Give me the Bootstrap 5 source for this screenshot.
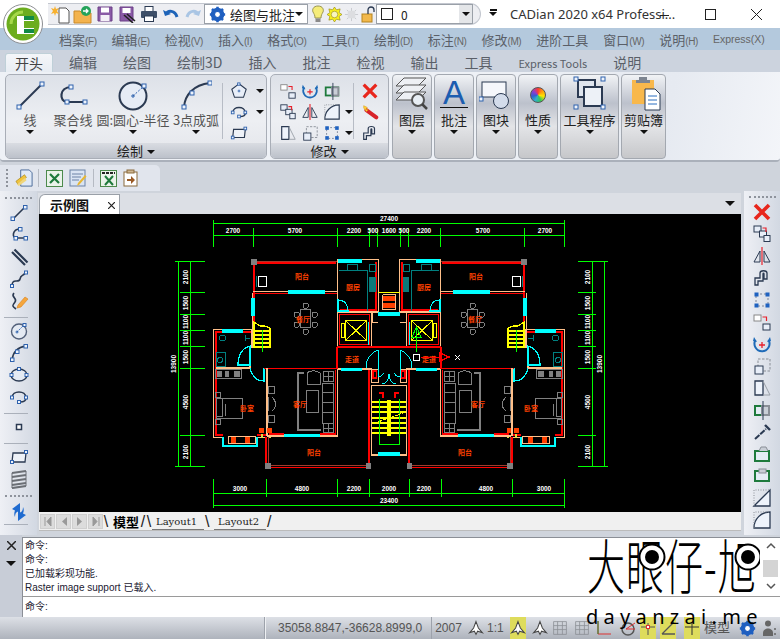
<!DOCTYPE html>
<html lang="zh-CN">
<head>
  <meta charset="UTF-8">
  <title>CADian 2020 x64 Professional</title>
  <meta name="viewport" content="width=device-width, initial-scale=1">
  <link href="https://cdn.jsdelivr.net/npm/bootstrap@5.3.3/dist/css/bootstrap.min.css" rel="stylesheet">
  <style>
    body { width: 780px; height: 639px; overflow: hidden; background: #cfd4dc; font-family: "Liberation Sans", "Noto Sans CJK SC", sans-serif; color: #333; }
    .app-win { width: 780px; height: 639px; position: relative; overflow: hidden; }
    svg { display: block; flex: none; }
    .no-clip { overflow: visible; }

    /* title bar */
    .title-bar { height: 28px; background: #fff; }
    .app-logo { position: absolute; left: 3px; top: 4px; z-index: 5; }
    .qat { height: 22px; margin: 3px 0 0 48px; width: 433px; padding-left: 2px; background: #edeef2; border: 1px solid #c3c7cf; border-left: 0; border-radius: 0 11px 11px 0; }
    .qat > * { flex: none; }
    .qat-ico { width: 22px; }
    .qat-combo { height: 20px; background: #fff; border: 1px solid #9aa0a8; font: 13px "Noto Sans CJK SC", sans-serif; color: #222; white-space: nowrap; }
    .qat-combo1 { width: 104px; margin-right: 2px; }
    .qat-combo2 { width: 97px; margin-left: 1px; }
    .combo-drop { width: 13px; align-self: stretch; background: #e4e6e9; }
    .title-text { width: 160px; margin: 5px 0 0 13px; font: 13px "Noto Sans", sans-serif; color: #333; white-space: nowrap; }
    .min-dash { width: 9px; height: 1px; background: #222; margin: 15px 0 0 -10px; }

    /* menu + tabs */
    .menu-row { height: 22px; background: #b4c9dd; padding-left: 59px; gap: 15px; font: 13px "Noto Sans CJK SC", sans-serif; color: #5a5f68; white-space: nowrap; }
    .menu-row small { font: 10px "Liberation Sans", sans-serif; letter-spacing: -.4px; color: #666; }
    .menu-row .xp-menu { font: 10.5px "Liberation Sans", sans-serif; color: #666; }
    .tab-row { height: 22px; background: #ccd3de; padding-left: 2px; font: 14px "Noto Sans CJK SC", sans-serif; color: #5a5f68; white-space: nowrap; }
    .rb-tab { padding: 0 10px; margin: 3px 3px 0; line-height: 19px; height: 19px; }
    .rb-tab.on { background: linear-gradient(#f4f6f9, #e8edf3); border: 1px solid #bfd0d8; border-bottom: 0; border-radius: 3px 3px 0 0; padding: 0 9px; color: #444; line-height: 18px; }
    .rb-tab .xt { font-size: 11px; }

    /* ribbon */
    .ribbon { height: 90px; background: linear-gradient(100deg, #eef1f6 60%, #e6eaf1 85%, #f3f5f9); border-bottom: 2px solid #aab0ba; border-radius: 0 0 4px 4px; padding: 2px 0 0 5px; gap: 3px; }
    .rb-group { width: 262px; height: 85px; border: 1px solid #a9aeb7; border-radius: 5px; background: linear-gradient(#dde1e8, #edeff3 55%, #e3e5ea); position: relative; }
    .rb-group.g2 { width: 119px; }
    .rb-body { height: 68px; padding: 5px 0 0 2px; }
    .rb-label { height: 15px; background: linear-gradient(#d9dce2, #bcc1ca); border-radius: 0 0 4px 4px; font: 13px/15px "Noto Sans CJK SC", sans-serif; color: #222; }
    .big-item { height: 62px; font: 13px/16px "Noto Sans CJK SC", sans-serif; color: #555; white-space: nowrap; }
    .big-ico { height: 31px; margin-bottom: 1px; }
    .iw44 { width: 44px; } .iw42 { width: 42px; } .iw78 { width: 78px; } .iw48 { width: 48px; }
    .rb-sep { width: 1px; height: 56px; background: #b7bcc5; margin: 3px 7px 0 2px; }
    .sm-row { height: 22px; }
    .dn-arrow { width: 0; height: 0; border-top: 4px solid #111; border-left: 4px solid transparent; border-right: 4px solid transparent; display: inline-block; flex: none; }
    .drop-gap { margin-top: 2px; }
    .rb-btn { height: 85px; border: 1px solid #a3a8b0; border-radius: 4px; background: linear-gradient(#f1f3f6, #bcc1cc 34%, #e3e4e7 62%, #c6c7ca); font: 13px/16px "Noto Sans CJK SC", sans-serif; color: #222; white-space: nowrap; padding-top: 1px; }
    .bw40 { width: 40px; margin-right: 2px; } .bw59 { width: 59px; margin-right: 2px; } .bw45 { width: 45px; }
    .big-glyph { height: 36px; }
    .col-wheel { width: 16px; height: 16px; border-radius: 50%; border: 1px solid #555; margin-top: 11px; background: conic-gradient(#ff3b30, #ff9f0a, #ffe600, #34c759, #30b0c7, #2f5fd0, #8e3bd0, #ff3b30); }

    /* small toolbar */
    .strip { height: 29px; padding-top: 3px; }
    .strip-bar { width: 160px; height: 26px; background: #e1e5ed; border-radius: 0 5px 0 0; padding-left: 6px; }
    .grip-v { width: 2px; height: 18px; border-left: 2px dotted #8e939c; margin-right: 3px; }
    .tool-sep-v { width: 1px; height: 18px; background: #b5bac3; margin: 0 4px; }

    /* side tool columns */
    .work { height: 344px; }
    .side-tools { width: 37px; background: linear-gradient(90deg, #eef0f5, #d2d8e2); }
    .side-tools.rt { width: 36px; margin-left: 3px; }
    .grip-h { width: 27px; height: 2px; border-top: 2px dotted #8e939c; margin: 6px auto 4px; }
    .side-tools.rt .grip-h { margin-top: 5px; }
    .side-tools .grip-low { margin: 4px auto 5px; }
    .t-item { height: 22px; }
    .tool-sep-h { width: 24px; height: 1px; background: #aab0ba; margin: 4px 0 3px 4px; }

    /* drawing area */
    .draw-col { width: 704px; padding-top: 2px; }
    .doc-head { height: 21px; background: #dcdfe5; margin-left: 1px; }
    .doc-tab { width: 81px; height: 20px; margin: 1px 0 0 1px; background: #fff; border: 1px solid #9aa0a8; border-bottom: 0; border-radius: 6px 0 0 0; padding-left: 10px; font: bold 13px/19px "Noto Sans CJK SC", sans-serif; color: #111; }
    .cad-view { width: 702px; height: 298px; margin-left: 2px; background: #000; }
    .sheet-row { height: 19px; margin-left: 2px; width: 702px; background: #f0f0f0; border-bottom: 1px solid #bbb; }
    .nav-btn { width: 15px; height: 15px; margin-left: 1px; background: #dcdcdc; border: 1px solid #cfcfcf; }
    .sheet-tab { font: 10px/18px "DejaVu Serif", serif; color: #222; padding: 0 7px 0 4px; height: 17px; border-bottom: 1px solid #777; white-space: nowrap; }
    .sheet-tab.on { font: bold 13px/17px "Noto Sans CJK SC", serif; color: #000; border: 0; padding: 0 1px 0 4px; }
    .sheet-slash { font: 16px/17px "Liberation Sans", sans-serif; color: #222; width: 6px; text-align: center; }

    /* command */
    .cmd-area { height: 82px; }
    .cmd-strip { width: 22px; background: #c8cdd7; padding-top: 5px; }
    .cmd-pane { width: 758px; height: 80px; margin-top: 2px; background: #fff; border: 1px solid #8b8f96; border-right: 0; border-bottom: 0; font: 10px/14px "Liberation Sans", "Noto Sans CJK SC", sans-serif; color: #1b2030; position: relative; }
    .cmd-hist { height: 59px; padding: 1px 0 0 2px; border-bottom: 1px solid #9a9a9a; }
    .cmd-line { padding: 3px 0 0 2px; }
    .cmd-scroll { position: absolute; right: 1px; top: 0; width: 17px; height: 58px; }
    .cmd-thumb { height: 17px; width: 15px; background: #d4d4d4; }
    .mark-box { position: absolute; left: 575px; top: 536px; width: 185px; height: 90px; z-index: 4; }
    .mark-main { position: absolute; left: 12px; top: -1px; font: 38px/38px "Noto Sans CJK SC", sans-serif; font-weight: 300; color: #000; white-space: nowrap; letter-spacing: 1px; transform: scaleY(1.55); transform-origin: left top; }
    .mark-sub { position: absolute; left: 11px; top: 72px; font: 20px/18px "Noto Sans", sans-serif; letter-spacing: 5.3px; color: #000; white-space: nowrap; }
    .mark-eye { position: absolute; left: 0; top: 0; }

    /* status */
    .status-bar { height: 22px; background: linear-gradient(#dde0e6, #aeb3bc); font: 12px/22px "Liberation Sans", "Noto Sans CJK SC", sans-serif; color: #555; white-space: nowrap; }
    .st-left { width: 265px; border-right: 1px solid #9da2ab; height: 22px; }
    .st-coord { width: 167px; padding-left: 12px; border-left: 1px solid #eef0f3; border-right: 1px solid #9da2ab; }
    .st-ver { width: 33px; text-align: center; }
    .st-ico { width: 22px; height: 22px; flex: none; }
    .st-ico.nar { width: 19px; }
    .st-ico.wid { width: 25px; }
    .st-ico.y { background: #dedc5c; width: 16px; }

    /* icon strokes */
    .h { fill: #eef3fb; stroke: #2f62ad; stroke-width: 1; }
    .n { fill: none; stroke: #2b3a52; stroke-width: 1.6; }
    .m { fill: none; stroke: #2b3a52; stroke-width: 1; }
    .b { fill: none; stroke: #1f6bb8; stroke-width: 2; }
    .r { fill: none; stroke: #e8202a; stroke-width: 1.2; }
    .g { fill: #e4ecf4; stroke: #1e7a3c; stroke-width: 2; }
    .f { fill: #e8eef8; stroke: #2b3a52; stroke-width: 1; }

    /* plan strokes */
    .wr, .wp, .wd, .cy, .yl, .gn, .gy, .te, .wt { fill: none; }
    .wr { stroke: #ff0000; stroke-width: 1.4; }
    .wp { stroke: #ffc08a; }
    .wd { stroke: #a5392c; }
    .cy { stroke: #00ffff; }
    .cf { fill: #00ffff; }
    .yl { stroke: #ffff00; }
    .yf { fill: #ffff00; }
    .gn { stroke: #00ff00; }
    .gy { stroke: #808080; }
    .gf { fill: #808080; }
    .te { stroke: #008080; }
    .tf { fill: #0a7a7a; }
    .or { fill: #ff4000; }
    .lm { fill: #e0e040; }
    .wt { stroke: #fff; }
    .cad-dim { font: bold 6.500px "Liberation Sans", sans-serif; fill: #fff; }
    .cad-room { font: bold 7px "Noto Sans CJK SC", sans-serif; fill: #ff4000; }
  </style>
</head>
<body>
<svg width="0" height="0" style="position:absolute">
  <defs>
    <!-- draw tools -->
    <symbol id="i-line" viewBox="0 0 20 20"><path class="n" d="M4 16 16 4"/><rect class="h" x="2" y="14" width="3.5" height="3.5"/><rect class="h" x="14.5" y="2.5" width="3.5" height="3.5"/></symbol>
    <symbol id="i-pline" viewBox="0 0 20 20"><path class="n" d="M11 4C3 4 3 13 7 13H16"/><rect class="h" x="9.500" y="2.500" width="3.500" height="3.500"/><rect class="h" x="5" y="11.500" width="3.500" height="3.500"/><rect class="h" x="15" y="11.500" width="3.500" height="3.500"/></symbol>
    <symbol id="i-mline" viewBox="0 0 20 20"><path class="n" d="M3 5 16 18M5.500 2.500 18.500 15.500" style="stroke-width:2.200"/></symbol>
    <symbol id="i-spline" viewBox="0 0 20 20"><path class="n" d="M3 17C3 8 10 15 11 10S14 8 17 3"/><rect class="h" x="1.500" y="15.500" width="3" height="3"/><rect class="h" x="15.500" y="2" width="3" height="3"/></symbol>
    <symbol id="i-sketch" viewBox="0 0 20 20"><path class="n" d="M5 2C1 6 9 7 6 11S3 15 7 18"/><path d="M9 14 16 6l3 2-7 8-4 1z" fill="#f5a63c" stroke="#d97f1a" stroke-width=".6"/></symbol>
    <symbol id="i-circle" viewBox="0 0 20 20"><circle cx="10" cy="10.500" r="7.500" fill="#e4eaf3" stroke="#52607a" stroke-width="1.400"/><path d="M8 11 15 4" stroke="#2f62ad" stroke-dasharray="1.500 1"/><path d="M6.500 11h3M8 9.500v3" stroke="#2f62ad"/><rect class="h" x="14" y="2.500" width="3" height="3"/></symbol>
    <symbol id="i-arc" viewBox="0 0 20 20"><path class="n" d="M3 17C4 9 9 4 17 3"/><rect class="h" x="1.500" y="15" width="3.500" height="3.500"/><rect class="h" x="6.500" y="7" width="3.500" height="3.500"/><rect class="h" x="15" y="1.500" width="3.500" height="3.500"/></symbol>
    <symbol id="i-ellipse" viewBox="0 0 20 20"><ellipse cx="10" cy="10" rx="8" ry="6" fill="#e4eaf3" stroke="#2b3a52" stroke-width="1.400"/><rect class="h" x="1" y="8.500" width="3" height="3"/><rect class="h" x="16" y="8.500" width="3" height="3"/><rect class="h" x="8.500" y="2.500" width="3" height="3"/></symbol>
    <symbol id="i-earc" viewBox="0 0 20 20"><path class="n" d="M3 11C3 3 17 3 17 11 17 14 14 15 11 15"/><rect class="h" x="1.500" y="9" width="3" height="3"/><rect class="h" x="15.500" y="9" width="3" height="3"/><rect class="h" x="8.500" y="13.500" width="3" height="3"/></symbol>
    <symbol id="i-point" viewBox="0 0 20 20"><rect x="7.500" y="7.500" width="5" height="5" fill="#fff" stroke="#2b3a52" stroke-width="1.500"/></symbol>
    <symbol id="i-rect" viewBox="0 0 20 20"><path d="M4 6H17L16 15H3Z" fill="#eef2f8" stroke="#2b3a52" stroke-width="1.300"/><rect class="h" x="15.500" y="3.500" width="3" height="3"/><rect class="h" x="1.500" y="13.500" width="3" height="3"/></symbol>
    <symbol id="i-spring" viewBox="0 0 20 20"><path d="M3 4 17 2M3 8 17 6M3 12 17 10M3 16 17 14M3 19 17 17" stroke="#6b6f75" stroke-width="2.200" fill="none"/><path d="M3 4V19M17 2V17" stroke="#6b6f75" stroke-width="1" fill="none"/></symbol>
    <symbol id="i-sync" viewBox="0 0 20 20"><path d="M11 1 3 7l3 1.500C5 11 5 13 6 15c0-3 1-5 3-5.500L11 12Z" fill="#1f6bd0"/><path d="M9 19l8-6-3-1.500c1-2.500 1-4.500 0-6.500 0 3-1 5-3 5.500L9 8Z" fill="#1f6bd0"/></symbol>
    <symbol id="i-polygon" viewBox="0 0 20 20"><path d="M10 2 18 8 15 17H5L2 8Z" fill="#e8eef8" stroke="#2b3a52" stroke-width="1.200"/><path d="M8.500 10h3M10 8.500v3" stroke="#2f62ad"/><rect class="h" x="8.500" y="1" width="2.600" height="2.600"/></symbol>

    <!-- modify tools -->
    <symbol id="i-del" viewBox="0 0 20 20"><path d="M3 3 17 17M17 3 3 17" stroke="#e8261c" stroke-width="3.600" fill="none"/></symbol>
    <symbol id="i-copy" viewBox="0 0 20 20"><rect class="f" x="2" y="2" width="7" height="6"/><rect class="f" x="7.500" y="7" width="7" height="6"/><rect class="f" x="12" y="11.500" width="6" height="6"/><path class="r" d="M10.500 4H14V8"/></symbol>
    <symbol id="i-mirror" viewBox="0 0 20 20"><path class="r" d="M10 1V19"/><path class="m" d="M8 5V16H2ZM12 5V16H18Z"/></symbol>
    <symbol id="i-offset" viewBox="0 0 20 20"><path class="m" d="M3 17V10H8V5C8 2 15 2 15 5V11H12V6C12 5 11 5 11 6V13H6V17Z" style="stroke-width:1.300"/></symbol>
    <symbol id="i-dots" viewBox="0 0 20 20"><rect x="4" y="4" width="12" height="12" fill="none" stroke="#7c8698" stroke-dasharray="2 2"/><g fill="#1f62c0"><rect x="2.500" y="2.500" width="4" height="4"/><rect x="13.500" y="2.500" width="4" height="4"/><rect x="2.500" y="13.500" width="4" height="4"/><rect x="13.500" y="13.500" width="4" height="4"/></g></symbol>
    <symbol id="i-move" viewBox="0 0 20 20"><rect x="2" y="3" width="7" height="6" fill="#fff" stroke="#888"/><rect class="f" x="11" y="12" width="7" height="6"/><path class="r" d="M10.500 5H14.500V9"/></symbol>
    <symbol id="i-rotate" viewBox="0 0 20 20"><path class="b" d="M16.500 6A7.500 7.500 0 1 1 3.500 6"/><path d="M2 3 5 8 1 7zM18 3l-3 5 4-1z" fill="#1f6bb8"/><path d="M7 11h6M10 8v6" stroke="#e8202a" stroke-width="1.300"/></symbol>
    <symbol id="i-scale" viewBox="0 0 20 20"><rect x="6" y="3" width="12" height="12" fill="none" stroke="#8a8f97" stroke-dasharray="2.500 1.500"/><rect class="f" x="3" y="10" width="8" height="8"/></symbol>
    <symbol id="i-stretch" viewBox="0 0 20 20"><path d="M3 3H11V17H3Z" fill="#eef3fb" stroke="#2b3a52" stroke-width="1.300"/><path d="M11 3 18 17H11" fill="none" stroke="#9aa0a8"/></symbol>
    <symbol id="i-trim" viewBox="0 0 20 20"><rect class="g" x="3" y="6" width="14" height="9"/><rect x="10" y="6" width="7" height="9" fill="#c9ced6" stroke="#8a8f97" stroke-width="2"/><path d="M11 1V20" stroke="#2b3a52" stroke-width="1"/></symbol>
    <symbol id="i-brush" viewBox="0 0 20 20"><path d="M3 17 14 7" stroke="#2b3a52" stroke-width="2" stroke-dasharray="6 1" fill="none"/><path d="M13 3 18 8" stroke="#2b3a52" stroke-width="2.400"/></symbol>
    <symbol id="i-explode" viewBox="0 0 20 20"><path d="M6 8 17 16" stroke="#d8232a" stroke-width="4.400" stroke-linecap="round"/><path d="M3 3l4 2-2 2 3 .5-2 2-3-4z" fill="#ffd23c" stroke="#d99c10" stroke-width=".6"/></symbol>
    <symbol id="i-ext1" viewBox="0 0 20 20"><rect class="g" x="3" y="7" width="14" height="10"/><path d="M7 7 9 3h5l2 4" fill="#c9ced6" stroke="#8a8f97"/></symbol>
    <symbol id="i-ext2" viewBox="0 0 20 20"><rect class="g" x="3" y="5" width="14" height="10"/><rect x="7" y="3" width="7" height="4" fill="#c9ced6" stroke="#8a8f97"/></symbol>
    <symbol id="i-chamfer" viewBox="0 0 20 20"><path d="M2 18 18 2V18Z" fill="#eef3fb" stroke="#2b3a52" stroke-width="1.300"/><path d="M2 18V2H18" fill="none" stroke="#8a8f97" stroke-dasharray="1 1.500"/></symbol>
    <symbol id="i-fillet" viewBox="0 0 20 20"><path d="M2 18C2 9 9 2 18 2V18Z" fill="#eef3fb" stroke="#2b3a52" stroke-width="1.300"/><path d="M2 18V2H18" fill="none" stroke="#8a8f97" stroke-dasharray="1 1.500"/></symbol>

    <!-- status -->
    <symbol id="s-ann" viewBox="0 0 20 20"><path d="M10 2 13 10 18 16 12 14 10 18 8 14 2 16 7 10Z" fill="#fff" stroke="#444" stroke-width="1.300"/></symbol>
    <symbol id="s-grid" viewBox="0 0 20 20"><path d="M2 2H18V18H2ZM2 7H18M2 12H18M7 2V18M13 2V18" fill="none" stroke="#8c8f95"/></symbol>
    <symbol id="s-gear" viewBox="0 0 20 20"><circle cx="10" cy="10" r="6" fill="none" stroke="#1f5fc0" stroke-width="4"/><path d="M10 1V19M1 10H19M3.500 3.500 16.500 16.500M16.500 3.500 3.500 16.500" stroke="#1f5fc0" stroke-width="3"/><circle cx="10" cy="10" r="2.800" fill="#fff"/></symbol>

    <!-- one half of the floor plan, the other half is this mirrored -->
    <g id="plan-half">
      <path class="wd" d="M254 261H337"/>
      <path class="wr" d="M254 263H336M254 263V298M254 316V329"/>
      <path class="wp" d="M252 293V298M252 316V329"/>
      <rect class="gf" x="251" y="259" width="6" height="6"/>
      <rect class="wt" x="258" y="276.500" width="8" height="10"/>
      <path class="te" d="M256 276V287"/>
      <path class="wp" d="M253 291H288M325 291H337"/>
      <path class="wr" d="M253 293.500H288M325 293.500H337"/>
      <rect class="cf" x="288" y="290" width="37" height="3.500"/>
      <rect class="cf" x="251" y="298" width="4" height="18"/>
      <!-- kitchen -->
      <rect class="wp" x="337.500" y="259.500" width="41" height="52.500" stroke-width="1.200"/>
      <path class="wr" d="M376 262V310H340"/>
      <rect class="cf" x="338" y="259" width="24" height="3.500"/>
      <path class="te" d="M339 270H367V311"/>
      <rect class="te" x="347" y="264" width="10" height="6"/>
      <path class="te" d="M369 264H375V271H369Z"/>
      <rect class="tf" x="369" y="277" width="6.500" height="15"/>
      <path class="cy" d="M338 300C345 300 348 305 348 311H338Z" stroke-width="1.200"/>
      <!-- lift -->
      <rect class="wp" x="337.500" y="312.500" width="34" height="34"/>
      <rect class="wr" x="339.500" y="314.500" width="30" height="30"/>
      <rect class="yl" x="345.500" y="320.500" width="21" height="20" stroke-width="1.200"/>
      <path class="yl" d="M345.500 320.500 366.500 340.500M366.500 320.500 345.500 340.500"/>
      <rect class="yl" x="341.500" y="323.500" width="3" height="14"/>
      <path class="cy" d="M368.500 322V345"/>
      <path class="wr" d="M337 347H389M337 347V368"/>
      <path class="wp" d="M372 312V322H378"/>
      <path class="cy" d="M366 368C366 358 372 352 378 350M378 350V368"/>
      <rect class="cf" x="378" y="312" width="11" height="3.500"/>
      <path class="yl" d="M378 292H389"/>
      <path class="wp" d="M382.500 294.500H389M382.500 309.500H389M382.500 294.500V309.500"/>
      <rect class="or" x="383" y="296" width="6" height="5"/>
      <rect class="or" x="383" y="303" width="6" height="5"/>
      <!-- stair by the living room -->
      <path class="yl" d="M254 322 260 326H265L270 328V347H254ZM254 331H270M254 335H270M254 339H270M254 343H270" stroke-width="1.100"/>
      <path class="gn" d="M262 330V352"/>
      <!-- toilet -->
      <path class="wp" d="M252 329.500H213.500V437.500H223M257 437.500H267M252 329V347H250V368" stroke-width="1.300"/>
      <path class="wr" d="M251 332H216V435H223M257 435H266"/>
      <rect class="cf" x="222" y="329" width="21" height="3.500"/>
      <path class="wp" d="M216 367.500H250" stroke-width="2"/>
      <rect class="te" x="219.500" y="335.500" width="6" height="5" rx="2"/>
      <path class="te" d="M245 338H250M245 335V341"/>
      <rect class="te" x="216" y="352" width="9" height="14"/>
      <circle class="te" cx="220" cy="360" r="2.500"/>
      <path class="cy" d="M250 346C243 348 238 354 238 365H250Z" stroke-width="1.200"/>
      <path class="cy" d="M250 368C252 376 256 381 264 381V368" stroke-width="1.200"/>
      <!-- bedroom -->
      <path class="wr" d="M264 368.500H337"/>
      <path class="wp" d="M266.500 368V436" stroke-width="2"/>
      <rect class="gy" x="215.500" y="369.500" width="26" height="9"/>
      <rect class="gf" x="217" y="371" width="5" height="6"/>
      <rect class="gf" x="225" y="371" width="4" height="6"/>
      <rect class="gf" x="234" y="371" width="6" height="6"/>
      <rect class="gy" x="216.500" y="398" width="26" height="20"/>
      <path class="gy" d="M216.500 398H222V416H216.500M222 398V416M225 404V416"/>
      <rect class="gy" x="215.500" y="392" width="5" height="5"/>
      <rect class="gy" x="215.500" y="419" width="5" height="5"/>
      <path class="cy" d="M223 437V446H257V437" stroke-width="2"/>
      <rect class="wp" x="228.500" y="436.500" width="27" height="6.500"/>
      <rect class="or" x="231" y="437" width="5" height="6"/>
      <rect class="or" x="245" y="437" width="5" height="6"/>
      <rect class="or" x="259" y="428" width="5" height="4.500"/>
      <rect class="or" x="267" y="428" width="4.500" height="4.500"/>
      <rect class="lm" x="261" y="433.500" width="2" height="4"/>
      <rect class="lm" x="269" y="433.500" width="2" height="4"/>
      <!-- living room -->
      <path class="wp" d="M337.500 368V436H320M284 436H267" stroke-width="1.300"/>
      <path class="wr" d="M335.500 370V434H320M284 434H269"/>
      <rect class="cf" x="284" y="433.500" width="36" height="3"/>
      <path class="gy" d="M304 373H298V430H321" stroke-width="2.600"/>
      <rect class="gy" x="306.500" y="390" width="12" height="22"/>
      <path class="gy" d="M307 384V373C310 370 316 370 320 373V384Z"/>
      <rect class="gy" x="322.500" y="383" width="11" height="40"/>
      <path class="gy" d="M322.500 392H333M322.500 402H333M322.500 412H333"/>
      <rect class="gy" x="323.500" y="371" width="10" height="10"/>
      <path class="gy" d="M323.500 376H333.500M328.500 371V381"/>
      <rect class="gy" x="323.500" y="423.500" width="10" height="9"/>
      <path class="gy" d="M323.500 428H333.500M328.500 423.500V432.500"/>
      <rect class="gy" x="268" y="386" width="6" height="7"/>
      <rect class="gy" x="268" y="415" width="6" height="7"/>
      <path class="gy" d="M268 397V411M272 397C277 402 277 407 272 411"/>
      <!-- dining set -->
      <rect class="gy" x="300.500" y="309.500" width="10" height="18" stroke-width="1.300"/>
      <rect class="gy" x="303" y="303" width="5" height="5" rx="1"/>
      <rect class="gy" x="303" y="329" width="5" height="5" rx="1"/>
      <rect class="gy" x="294" y="312" width="5" height="5" rx="1"/>
      <rect class="gy" x="294" y="322" width="5" height="5" rx="1"/>
      <rect class="gy" x="312" y="312" width="5" height="5" rx="1"/>
      <rect class="gy" x="312" y="322" width="5" height="5" rx="1"/>
      <!-- hall and main stair -->
      <path class="wr" d="M337 368.500H372M369 368V466"/>
      <path class="wp" d="M338 369H372M371.500 385V455H389" stroke-width="1.200"/>
      <rect class="cf" x="341" y="368" width="21" height="3"/>
      <rect class="wp" x="371.500" y="369" width="6.500" height="13"/>
      <rect class="wr" x="373" y="371" width="3.500" height="7"/>
      <path class="wp" d="M371.500 385H389"/>
      <path class="cy" d="M378 368V377C380 377 382 376 384 373M389 374C389 379 387 383 382 384"/>
      <path class="wr" d="M379 393H383V398"/>
      <path class="yl" d="M372 402H389M372 407H389M372 412H389M372 418H389M372 423H389M372 428H389M372 433H389" stroke-width="1.200"/>
      <rect class="yf" x="387" y="400" width="2" height="36"/>
      <path class="gn" d="M379 399V444H389"/>
      <rect class="cf" x="378" y="452" width="11" height="3.500"/>
      <!-- lower balcony -->
      <path class="wd" d="M268 465H369M268 437V465"/>
      <path class="wr" d="M266 437V467.500H369"/>
      <rect class="gf" x="265" y="463" width="6" height="6"/>
      <rect class="gf" x="366" y="463" width="5" height="6"/>
    </g>
  </defs>
</svg>

<div class="app-win d-flex flex-column">

  <svg class="app-logo" width="42" height="42" viewBox="0 0 42 42">
    <circle cx="20" cy="20" r="19.500" fill="#fff" stroke="#8d8f93" stroke-width="1"/>
    <circle cx="20" cy="20" r="16.500" fill="#6cad1e"/>
    <path d="M8 20A12 12 0 0 1 20 8" stroke="#a6d84a" stroke-width="3" fill="none"/>
    <path d="M14 12H31V17H21V24H31V30H14Z" fill="#fff"/>
    <rect x="21" y="12" width="10" height="4" fill="#118a45"/>
    <rect x="21" y="25" width="10" height="4" fill="#118a45"/>
  </svg>

  <!-- title bar -->
  <div class="title-bar d-flex align-items-start">
    <div class="qat d-flex align-items-center">
      <div class="qat-ico d-flex justify-content-center"><svg width="20" height="19" viewBox="0 0 20 19"><path d="M8 3H15L18 6V18H8Z" fill="#fff" stroke="#555"/><path d="M4 1 5 4 8 3 6 6 8 9 5 8 4 11 3 8 0 9 2 6 0 3 3 4Z" fill="#f8b12e"/></svg></div>
      <div class="qat-ico d-flex justify-content-center"><svg width="20" height="19" viewBox="0 0 20 19"><path d="M1 6H7L9 8H18V18H1Z" fill="#f3b34e" stroke="#c98a2a"/><circle cx="13" cy="6" r="5" fill="#25a35a"/><path d="M10 6H15M13 4l2 2-2 2" stroke="#fff" fill="none" stroke-width="1.300"/></svg></div>
      <div class="qat-ico d-flex justify-content-center"><svg width="18" height="18" viewBox="0 0 18 18"><path d="M2 2H16V16H2Z" fill="#8a5aa6" stroke="#6a3f86"/><rect x="5" y="2.500" width="8" height="5" fill="#fff"/><rect x="4.500" y="10" width="9" height="6" fill="#f4f0f7"/></svg></div>
      <div class="qat-ico d-flex justify-content-center"><svg width="18" height="18" viewBox="0 0 18 18"><path d="M2 2H15V16H2Z" fill="#8a5aa6" stroke="#6a3f86"/><rect x="4.500" y="3" width="8" height="5" fill="#fff"/><path d="M6 10 15 18M9 9 17 16" stroke="#222" stroke-width="1.600"/></svg></div>
      <div class="qat-ico d-flex justify-content-center"><svg width="18" height="18" viewBox="0 0 18 18"><rect x="5" y="1.500" width="8" height="5" fill="#fff" stroke="#2b3a52"/><rect x="1" y="6" width="16" height="7" rx="1" fill="#3e4f68"/><rect x="4.500" y="11" width="9" height="5.500" fill="#fff" stroke="#2b3a52"/></svg></div>
      <div class="qat-ico d-flex justify-content-center"><svg width="18" height="18" viewBox="0 0 18 18"><path d="M1 5 3 11 9 9Z" fill="#1d63b8"/><path d="M4 9C6 5 13 5 15 12" fill="none" stroke="#1d63b8" stroke-width="3"/></svg></div>
      <div class="qat-ico d-flex justify-content-center"><svg width="18" height="18" viewBox="0 0 18 18"><path d="M17 5 15 11 9 9Z" fill="#a9c5e4"/><path d="M14 9C12 5 5 5 3 12" fill="none" stroke="#a9c5e4" stroke-width="3"/></svg></div>
      <div class="qat-combo qat-combo1 d-flex align-items-center">
        <svg class="mx-1" width="17" height="17" viewBox="0 0 20 20"><use href="#s-gear"/></svg>
        <span class="flex-grow-1">绘图与批注</span>
        <span class="dn-arrow me-1"></span>
      </div>
      <div class="d-flex justify-content-center" style="width:16px"><svg width="14" height="18" viewBox="0 0 14 18"><path d="M7 1C2 1 1 5 2 7 3 9 4 10 4 13H10C10 10 11 9 12 7 13 5 12 1 7 1Z" fill="#f5ec79" stroke="#9a9650"/><rect x="4.500" y="13.500" width="5" height="3.500" fill="#8a8a8a"/></svg></div>
      <div class="d-flex justify-content-center" style="width:17px"><svg width="15" height="15" viewBox="0 0 16 16"><path d="M8 0 10 3 14 2 13 6 16 8 13 10 14 14 10 13 8 16 6 13 2 14 3 10 0 8 3 6 2 2 6 3Z" fill="#f8ef1e" stroke="#8a7f10" stroke-width=".6"/><circle cx="8" cy="8" r="3.500" fill="#f8f6c0" stroke="#8a7f10" stroke-width=".6"/></svg></div>
      <div class="d-flex justify-content-center" style="width:17px"><svg width="15" height="15" viewBox="0 0 16 16"><path d="M8 1V15M1 8H15M3 3 13 13M13 3 3 13" stroke="#c8cace"/><rect x="4" y="4" width="8" height="8" fill="#dcdde0"/></svg></div>
      <div class="d-flex justify-content-center" style="width:15px"><svg width="14" height="17" viewBox="0 0 14 17"><rect x="1" y="8" width="10" height="8" fill="#f2b84b" stroke="#b58420"/><path d="M7 8V4C7 0 13 0 13 4V6" fill="none" stroke="#2b3a52" stroke-width="1.300"/></svg></div>
      <div class="qat-combo qat-combo2 d-flex align-items-center">
        <svg width="12" height="12" class="ms-1 me-1" viewBox="0 0 12 12"><rect x=".5" y=".5" width="11" height="11" fill="#fff" stroke="#222"/></svg>
        <span class="flex-grow-1 ms-1" style="font-size:12px">0</span>
        <span class="combo-drop d-flex align-items-center justify-content-center"><span class="dn-arrow"></span></span>
      </div>
    </div>
    <div class="d-flex flex-column align-items-center" style="margin:9px 0 0 8px;width:8px"><span style="width:7px;height:2px;background:#111;margin-bottom:1px"></span><span class="dn-arrow"></span></div>
    <div class="title-text">CADian 2020 x64 Professi...</div>
    <div class="min-dash"></div>
    <svg style="margin:9px 0 0 36px" width="11" height="11" viewBox="0 0 11 11"><rect x=".5" y=".5" width="10" height="10" fill="none" stroke="#222"/></svg>
    <svg style="margin:9px 0 0 35px" width="11" height="11" viewBox="0 0 11 11"><path d="M0 0 11 11M11 0 0 11" stroke="#222"/></svg>
  </div>

  <!-- menu -->
  <div class="menu-row d-flex align-items-center">
    <span>档案<small>(F)</small></span><span>编辑<small>(E)</small></span><span>检视<small>(V)</small></span><span>插入<small>(I)</small></span><span>格式<small>(O)</small></span><span>工具<small>(T)</small></span><span>绘制<small>(D)</small></span><span>标注<small>(N)</small></span><span>修改<small>(M)</small></span><span>进阶工具</span><span>窗口<small>(W)</small></span><span>说明<small>(H)</small></span><span class="xp-menu">Express(X)</span>
  </div>

  <!-- ribbon tabs -->
  <div class="tab-row d-flex">
    <div class="rb-tab on">开头</div><div class="rb-tab">编辑</div><div class="rb-tab">绘图</div><div class="rb-tab">绘制3D</div><div class="rb-tab">插入</div><div class="rb-tab">批注</div><div class="rb-tab">检视</div><div class="rb-tab">输出</div><div class="rb-tab">工具</div><div class="rb-tab"><span class="xt">Express Tools</span></div><div class="rb-tab">说明</div>
  </div>

  <!-- ribbon -->
  <div class="ribbon d-flex">
    <div class="rb-group">
      <div class="rb-body d-flex">
        <div class="big-item iw44 d-flex flex-column align-items-center">
          <svg class="big-ico" width="30" height="31" viewBox="0 0 30 31"><path d="M4 27 27 4" stroke="#2b3a52" stroke-width="2"/><rect class="h" x="2" y="25" width="4" height="4"/><rect class="h" x="25" y="2" width="4" height="4"/></svg>
          <span>线</span><span class="dn-arrow drop-gap"></span>
        </div>
        <div class="big-item iw42 d-flex flex-column align-items-center">
          <svg class="big-ico" width="32" height="31" viewBox="0 0 32 31"><path d="M14 7C2 7 2 22 10 22H27" fill="none" stroke="#2b3a52" stroke-width="2.200"/><rect class="h" x="12" y="5" width="4" height="4"/><rect class="h" x="8" y="20" width="4" height="4"/><rect class="h" x="26" y="20" width="4" height="4"/></svg>
          <span>聚合线</span><span class="dn-arrow drop-gap"></span>
        </div>
        <div class="big-item iw78 d-flex flex-column align-items-center">
          <svg class="big-ico" width="32" height="31" viewBox="0 0 32 31"><circle cx="16" cy="16" r="13.500" fill="#e6ecf5" stroke="#2b3a52" stroke-width="2"/><path d="M16 16 27 6" stroke="#2f62ad" stroke-dasharray="2 1.500"/><path d="M14 16h4M16 14v4" stroke="#2f62ad"/><rect class="h" x="25" y="4" width="4" height="4"/></svg>
          <span>圆:圆心-半径</span><span class="dn-arrow drop-gap"></span>
        </div>
        <div class="big-item iw48 d-flex flex-column align-items-center">
          <svg class="big-ico" width="32" height="31" viewBox="0 0 32 31"><path d="M4 27C5 15 13 5 30 3" fill="none" stroke="#2b3a52" stroke-width="2"/><rect class="h" x="2" y="25" width="4" height="4"/><rect class="h" x="10" y="11" width="4" height="4"/><rect class="h" x="28" y="1" width="4" height="4"/></svg>
          <span>3点成弧</span><span class="dn-arrow drop-gap"></span>
        </div>
        <div class="rb-sep"></div>
        <div class="d-flex flex-column" style="padding-top:1px">
          <div class="sm-row d-flex align-items-center gap-2"><svg width="18" height="18"><use href="#i-polygon"/></svg><span class="dn-arrow"></span></div>
          <div class="sm-row d-flex align-items-center gap-2"><svg width="18" height="18"><use href="#i-earc"/></svg><span class="dn-arrow"></span></div>
          <div class="sm-row d-flex align-items-center"><svg width="18" height="18"><use href="#i-rect"/></svg></div>
        </div>
      </div>
      <div class="rb-label d-flex align-items-center justify-content-center gap-1">绘制 <span class="dn-arrow" style="margin-top:2px"></span></div>
    </div>

    <div class="rb-group g2">
      <div class="rb-body d-flex ps-2">
        <div class="d-flex flex-column" style="width:74px">
          <div class="sm-row d-flex align-items-center"><svg width="18" height="18"><use href="#i-move"/></svg><svg class="ms-1" width="18" height="18"><use href="#i-rotate"/></svg><svg class="ms-1" width="18" height="18"><use href="#i-trim"/></svg></div>
          <div class="sm-row d-flex align-items-center"><svg width="18" height="18"><use href="#i-copy"/></svg><svg class="ms-1" width="18" height="18"><use href="#i-mirror"/></svg><svg class="ms-1" width="18" height="18"><use href="#i-fillet"/></svg><span class="dn-arrow ms-1"></span></div>
          <div class="sm-row d-flex align-items-center"><svg width="18" height="18"><use href="#i-stretch"/></svg><svg class="ms-1" width="18" height="18"><use href="#i-scale"/></svg><svg class="ms-1" width="18" height="18"><use href="#i-dots"/></svg><span class="dn-arrow ms-1"></span></div>
        </div>
        <div class="rb-sep" style="margin:3px 7px 0 0"></div>
        <div class="d-flex flex-column">
          <div class="sm-row d-flex align-items-center"><svg width="18" height="18"><use href="#i-del"/></svg></div>
          <div class="sm-row d-flex align-items-center"><svg width="18" height="18"><use href="#i-explode"/></svg></div>
          <div class="sm-row d-flex align-items-center"><svg width="18" height="18"><use href="#i-offset"/></svg></div>
        </div>
      </div>
      <div class="rb-label d-flex align-items-center justify-content-center gap-1">修改 <span class="dn-arrow" style="margin-top:2px"></span></div>
    </div>

    <div class="d-flex">
      <div class="rb-btn bw40 d-flex flex-column align-items-center">
        <svg class="big-glyph" width="32" height="36" viewBox="0 0 32 36"><g fill="#eef0f4" stroke="#555"><path d="M8 2H30L22 10H0Z"/><path d="M8 9H30L22 17H0Z"/><path d="M8 16H30L22 24H0Z"/></g><circle cx="22" cy="24" r="6" fill="#e8eef4" stroke="#555" stroke-width="2"/><path d="M26 28 31 33" stroke="#444" stroke-width="2.500"/></svg>
        <span>图层</span><span class="dn-arrow drop-gap"></span>
      </div>
      <div class="rb-btn bw40 d-flex flex-column align-items-center">
        <svg class="big-glyph no-clip" width="32" height="36" viewBox="0 0 32 36"><text x="16" y="28" text-anchor="middle" font-family="Liberation Sans, sans-serif" font-size="33" fill="#1c5db0">A</text><path d="M2 31.500H30" stroke="#111"/></svg>
        <span>批注</span><span class="dn-arrow drop-gap"></span>
      </div>
      <div class="rb-btn bw40 d-flex flex-column align-items-center">
        <svg class="big-glyph" width="34" height="36" viewBox="0 0 34 36"><rect x="3" y="6" width="24" height="15" fill="#f5f7fb" stroke="#2b3a52"/><circle cx="22" cy="25" r="7.500" fill="#d3dceb" stroke="#2b3a52"/><rect class="h" x="0" y="21" width="4" height="4"/></svg>
        <span>图块</span><span class="dn-arrow drop-gap"></span>
      </div>
      <div class="rb-btn bw40 d-flex flex-column align-items-center">
        <div class="big-glyph"><div class="col-wheel"></div></div>
        <span>性质</span><span class="dn-arrow drop-gap"></span>
      </div>
      <div class="rb-btn bw59 d-flex flex-column align-items-center">
        <svg class="big-glyph" width="34" height="36" viewBox="0 0 34 36"><rect x="5" y="4" width="17" height="17" fill="#dfe5ee" stroke="#2b3a52" stroke-width="2"/><rect x="11" y="11" width="18" height="19" fill="#edf1f7" stroke="#2b3a52" stroke-width="2"/><rect class="h" x="1" y="1" width="4" height="4"/><rect class="h" x="28" y="1" width="4" height="4"/><rect class="h" x="1" y="29" width="4" height="4"/><rect class="h" x="28" y="29" width="4" height="4"/></svg>
        <span>工具程序</span><span class="dn-arrow drop-gap"></span>
      </div>
      <div class="rb-btn bw45 d-flex flex-column align-items-center">
        <svg class="big-glyph" width="36" height="36" viewBox="0 0 36 36"><rect x="6" y="4" width="22" height="24" fill="#f8b84c"/><path d="M13 4V1H21V4H24V7H10V4Z" fill="#7d8591"/><path d="M19 13H29L34 18V34H19Z" fill="#fff" stroke="#2b3a52"/><path d="M22 20H31M22 24H31M22 28H31" stroke="#2a6fc0"/></svg>
        <span>剪贴簿</span><span class="dn-arrow drop-gap"></span>
      </div>
    </div>
  </div>

  <!-- standard toolbar -->
  <div class="strip d-flex">
    <div class="strip-bar d-flex align-items-center">
      <div class="grip-v"></div>
      <svg class="ms-1" width="19" height="19" viewBox="0 0 20 20"><path d="M6 1H15L18 4V18H6Z" fill="#dfe9f7" stroke="#4b6a99"/><path d="M1 13 10 6l2 3-9 7z" fill="#f0c33c" stroke="#a88716" stroke-width=".7"/><path d="M2 16 11 9 12 12 4 18z" fill="#f0d67c"/></svg>
      <div class="tool-sep-v" style="margin-left:4px;margin-right:7px"></div>
      <svg width="17" height="17" viewBox="0 0 17 17"><rect x=".5" y=".5" width="16" height="16" fill="#eaf3ea" stroke="#4c8a4c"/><path d="M4 4 13 13M13 4 4 13" stroke="#1e7a3c" stroke-width="2.200"/></svg>
      <svg style="margin-left:6px" width="18" height="18" viewBox="0 0 18 18"><rect x="1" y="1" width="15" height="16" fill="#d9e4f3" stroke="#6c83a6"/><path d="M3 5H14M3 8H12M3 11H10" stroke="#6c83a6"/><path d="M9 14 16 6l1.500 1.500L10 16l-2 .5z" fill="#e8b733"/></svg>
      <div class="tool-sep-v" style="margin-left:6px;margin-right:6px"></div>
      <svg width="17" height="17" viewBox="0 0 17 17"><rect x=".5" y=".5" width="16" height="16" fill="#eaf3ea" stroke="#4c8a4c"/><path d="M5 6 13 15M13 6 5 15" stroke="#1e7a3c" stroke-width="2"/><path d="M2 3H15" stroke="#222" stroke-width="2" stroke-dasharray="3 1"/></svg>
      <svg style="margin-left:5px" width="17" height="18" viewBox="0 0 17 18"><rect x="2" y="3" width="13" height="14" fill="#fff" stroke="#8a6a3c"/><rect x="5" y="1" width="7" height="3" fill="#cfb793" stroke="#8a6a3c"/><path d="M5 10H9V7L13 11 9 15V12H5Z" fill="#9a5a26"/></svg>
    </div>
  </div>

  <!-- workspace -->
  <div class="work d-flex">
    <div class="side-tools d-flex flex-column">
      <div class="grip-h"></div>
      <div class="t-item d-flex justify-content-center"><svg width="20" height="20"><use href="#i-line"/></svg></div>
      <div class="t-item d-flex justify-content-center"><svg width="20" height="20"><use href="#i-pline"/></svg></div>
      <div class="t-item d-flex justify-content-center"><svg width="20" height="20"><use href="#i-mline"/></svg></div>
      <div class="t-item d-flex justify-content-center"><svg width="20" height="20"><use href="#i-spline"/></svg></div>
      <div class="t-item d-flex justify-content-center"><svg width="20" height="20"><use href="#i-sketch"/></svg></div>
      <div class="tool-sep-h"></div>
      <div class="t-item d-flex justify-content-center"><svg width="20" height="20"><use href="#i-circle"/></svg></div>
      <div class="t-item d-flex justify-content-center"><svg width="20" height="20"><use href="#i-arc"/></svg></div>
      <div class="t-item d-flex justify-content-center"><svg width="20" height="20"><use href="#i-ellipse"/></svg></div>
      <div class="t-item d-flex justify-content-center"><svg width="20" height="20"><use href="#i-earc"/></svg></div>
      <div class="tool-sep-h"></div>
      <div class="t-item d-flex justify-content-center"><svg width="20" height="20"><use href="#i-point"/></svg></div>
      <div class="tool-sep-h"></div>
      <div class="t-item d-flex justify-content-center"><svg width="20" height="20"><use href="#i-rect"/></svg></div>
      <div class="t-item d-flex justify-content-center"><svg width="20" height="20"><use href="#i-spring"/></svg></div>
      <div class="grip-h grip-low"></div>
      <div class="t-item d-flex justify-content-center"><svg width="20" height="20"><use href="#i-sync"/></svg></div>
      <div class="tool-sep-h" style="margin-top:0"></div>
    </div>

    <div class="draw-col d-flex flex-column">
      <div class="doc-head d-flex align-items-center">
        <div class="doc-tab d-flex justify-content-between"><span>示例图</span><svg class="me-1" style="margin-top:7px" width="7" height="7" viewBox="0 0 7 7"><path d="M0 0 7 7M7 0 0 7" stroke="#222" stroke-width="1.200"/></svg></div>
        <span class="dn-arrow ms-auto" style="margin-right:6px;border-top-width:5px;border-left-width:5px;border-right-width:5px"></span>
      </div>
      <div class="cad-view">
        <svg class="cad" width="702" height="298" viewBox="39 214 702 298" shape-rendering="crispEdges">
          <!-- top dimensions -->
          <path class="gn" d="M213 223.500H565M213 235.500H565M213.500 220V247M253.500 228V247M337.500 228V247M369.500 228V247M377.500 228V247M400.500 228V247M408.500 228V247M440.500 228V247M524.500 228V247M564.500 220V247"/>
          <text class="cad-dim" x="389" y="221" text-anchor="middle">27400</text>
          <text class="cad-dim" x="233" y="233" text-anchor="middle">2700</text>
          <text class="cad-dim" x="295" y="233" text-anchor="middle">5700</text>
          <text class="cad-dim" x="354" y="233" text-anchor="middle">2200</text>
          <text class="cad-dim" x="373" y="233" text-anchor="middle">500</text>
          <text class="cad-dim" x="389" y="233" text-anchor="middle">1600</text>
          <text class="cad-dim" x="404" y="233" text-anchor="middle">500</text>
          <text class="cad-dim" x="424" y="233" text-anchor="middle">2200</text>
          <text class="cad-dim" x="483" y="233" text-anchor="middle">5700</text>
          <text class="cad-dim" x="545" y="233" text-anchor="middle">2700</text>
          <!-- bottom dimensions -->
          <path class="gn" d="M213 493.500H565M213 505.500H565M213.500 479V508M266.500 479V497M337.500 479V497M369.500 479V497M409.500 479V497M441.500 479V497M512.500 479V497M564.500 479V508"/>
          <text class="cad-dim" x="240" y="491" text-anchor="middle">3000</text>
          <text class="cad-dim" x="302" y="491" text-anchor="middle">4800</text>
          <text class="cad-dim" x="354" y="491" text-anchor="middle">2200</text>
          <text class="cad-dim" x="389" y="491" text-anchor="middle">2000</text>
          <text class="cad-dim" x="424" y="491" text-anchor="middle">2200</text>
          <text class="cad-dim" x="486" y="491" text-anchor="middle">4800</text>
          <text class="cad-dim" x="544" y="491" text-anchor="middle">3000</text>
          <text class="cad-dim" x="389" y="503" text-anchor="middle">23400</text>
          <!-- left dimensions -->
          <path class="gn" d="M178.500 261V466M190.500 261V466M175 261.500H205M180 292.500H205M180 314.500H205M180 330.500H205M180 346.500H205M180 368.500H205M180 435.500H205M175 466.500H205"/>
          <text class="cad-dim" transform="rotate(-90 188 277)" x="188" y="277" text-anchor="middle">2100</text>
          <text class="cad-dim" transform="rotate(-90 188 303)" x="188" y="303" text-anchor="middle">1500</text>
          <text class="cad-dim" transform="rotate(-90 188 322)" x="188" y="322" text-anchor="middle">1100</text>
          <text class="cad-dim" transform="rotate(-90 188 338)" x="188" y="338" text-anchor="middle">1100</text>
          <text class="cad-dim" transform="rotate(-90 188 357)" x="188" y="357" text-anchor="middle">1500</text>
          <text class="cad-dim" transform="rotate(-90 188 402)" x="188" y="402" text-anchor="middle">4500</text>
          <text class="cad-dim" transform="rotate(-90 188 452)" x="188" y="452" text-anchor="middle">2100</text>
          <text class="cad-dim" transform="rotate(-90 176 364)" x="176" y="364" text-anchor="middle">13900</text>
          <!-- right dimensions -->
          <path class="gn" d="M592.500 261V466M604.500 261V466M578 261.500H608M578 292.500H596M578 314.500H596M578 330.500H596M578 346.500H596M578 368.500H596M578 435.500H596M578 466.500H608"/>
          <text class="cad-dim" transform="rotate(-90 590 277)" x="590" y="277" text-anchor="middle">2100</text>
          <text class="cad-dim" transform="rotate(-90 590 303)" x="590" y="303" text-anchor="middle">1500</text>
          <text class="cad-dim" transform="rotate(-90 590 322)" x="590" y="322" text-anchor="middle">1100</text>
          <text class="cad-dim" transform="rotate(-90 590 338)" x="590" y="338" text-anchor="middle">1100</text>
          <text class="cad-dim" transform="rotate(-90 590 357)" x="590" y="357" text-anchor="middle">1500</text>
          <text class="cad-dim" transform="rotate(-90 590 402)" x="590" y="402" text-anchor="middle">4500</text>
          <text class="cad-dim" transform="rotate(-90 590 452)" x="590" y="452" text-anchor="middle">2100</text>
          <text class="cad-dim" transform="rotate(-90 602 364)" x="602" y="364" text-anchor="middle">13900</text>
          <!-- plan -->
          <use href="#plan-half"/>
          <use href="#plan-half" transform="translate(778 0) scale(-1 1)"/>
          <path class="yl" d="M372 424 406 412" stroke-dasharray="3 1"/>
          <!-- room names -->
          <text class="cad-room" x="302" y="279" text-anchor="middle">阳台</text>
          <text class="cad-room" x="476" y="279" text-anchor="middle">阳台</text>
          <text class="cad-room" x="353" y="290" text-anchor="middle">厨房</text>
          <text class="cad-room" x="424" y="290" text-anchor="middle">厨房</text>
          <text class="cad-room" x="303" y="322" text-anchor="middle">餐厅</text>
          <text class="cad-room" x="475" y="322" text-anchor="middle">餐厅</text>
          <text class="cad-room" x="352" y="362" text-anchor="middle">走道</text>
          <text class="cad-room" x="429" y="362" text-anchor="middle">走道</text>
          <text class="cad-room" x="247" y="411" text-anchor="middle">卧室</text>
          <text class="cad-room" x="531" y="411" text-anchor="middle">卧室</text>
          <text class="cad-room" x="300" y="407" text-anchor="middle">客厅</text>
          <text class="cad-room" x="478" y="407" text-anchor="middle">客厅</text>
          <text class="cad-room" x="314" y="455" text-anchor="middle">阳台</text>
          <text class="cad-room" x="465" y="455" text-anchor="middle">阳台</text>
          <!-- ucs marker and cursor -->
          <path class="gn" d="M416.500 352V328"/>
          <path class="gn" d="M416.500 327 412 337H421Z"/>
          <path class="wr" d="M421 357.500H440M440 353 449 357 440 361Z"/>
          <rect class="wt" x="413" y="354" width="6" height="6"/>
          <path class="wt" d="M455 355 460 360M460 355 455 360"/>
        </svg>
      </div>
      <div class="sheet-row d-flex align-items-center">
        <div class="nav-btn d-flex align-items-center justify-content-center"><svg width="8" height="9" viewBox="0 0 8 9"><path d="M1 0V9M7 0V9L3 4.500Z" fill="#999" stroke="#999"/></svg></div>
        <div class="nav-btn d-flex align-items-center justify-content-center"><svg width="6" height="9" viewBox="0 0 6 9"><path d="M6 0V9L1 4.500Z" fill="#999"/></svg></div>
        <div class="nav-btn d-flex align-items-center justify-content-center"><svg width="6" height="9" viewBox="0 0 6 9"><path d="M0 0V9L5 4.500Z" fill="#999"/></svg></div>
        <div class="nav-btn d-flex align-items-center justify-content-center"><svg width="8" height="9" viewBox="0 0 8 9"><path d="M7 0V9M1 0V9L5 4.500Z" fill="#999" stroke="#999"/></svg></div>
        <span class="sheet-slash">\</span><span class="sheet-tab on">模型</span><span class="sheet-slash">/</span><span class="sheet-slash">\</span><span class="sheet-tab">Layout1</span><span class="sheet-slash">\</span><span class="sheet-tab ms-1">Layout2</span><span class="sheet-slash">/</span>
      </div>
    </div>

    <div class="side-tools rt d-flex flex-column">
      <div class="grip-h"></div>
      <div class="t-item d-flex justify-content-center"><svg width="20" height="20"><use href="#i-del"/></svg></div>
      <div class="t-item d-flex justify-content-center"><svg width="20" height="20"><use href="#i-copy"/></svg></div>
      <div class="t-item d-flex justify-content-center"><svg width="20" height="20"><use href="#i-mirror"/></svg></div>
      <div class="t-item d-flex justify-content-center"><svg width="20" height="20"><use href="#i-offset"/></svg></div>
      <div class="t-item d-flex justify-content-center"><svg width="20" height="20"><use href="#i-dots"/></svg></div>
      <div class="t-item d-flex justify-content-center"><svg width="20" height="20"><use href="#i-move"/></svg></div>
      <div class="t-item d-flex justify-content-center"><svg width="20" height="20"><use href="#i-rotate"/></svg></div>
      <div class="t-item d-flex justify-content-center"><svg width="20" height="20"><use href="#i-scale"/></svg></div>
      <div class="t-item d-flex justify-content-center"><svg width="20" height="20"><use href="#i-stretch"/></svg></div>
      <div class="t-item d-flex justify-content-center"><svg width="20" height="20"><use href="#i-trim"/></svg></div>
      <div class="t-item d-flex justify-content-center"><svg width="20" height="20"><use href="#i-brush"/></svg></div>
      <div class="t-item d-flex justify-content-center"><svg width="20" height="20"><use href="#i-ext1"/></svg></div>
      <div class="t-item d-flex justify-content-center"><svg width="20" height="20"><use href="#i-ext2"/></svg></div>
      <div class="t-item d-flex justify-content-center"><svg width="20" height="20"><use href="#i-chamfer"/></svg></div>
      <div class="t-item d-flex justify-content-center"><svg width="20" height="20"><use href="#i-fillet"/></svg></div>
    </div>
  </div>

  <!-- command window -->
  <div class="cmd-area d-flex">
    <div class="cmd-strip d-flex flex-column align-items-center">
      <svg width="9" height="9" viewBox="0 0 9 9" style="margin-top:1px"><path d="M0 0 9 9M9 0 0 9" stroke="#222" stroke-width="1.500"/></svg>
      <span class="dn-arrow" style="margin-top:11px;border-top-width:5px;border-left-width:5px;border-right-width:5px"></span>
    </div>
    <div class="cmd-pane">
      <div class="cmd-hist">
        <div>命令:</div>
        <div>命令:</div>
        <div>已加载彩现功能.</div>
        <div>Raster image support 已载入.</div>
      </div>
      <div class="cmd-line">命令:</div>
      <div class="cmd-scroll d-flex flex-column align-items-center">
        <svg class="mt-1" width="10" height="8" viewBox="0 0 10 8"><path d="M1 6 5 2 9 6" fill="none" stroke="#555" stroke-width="1.500"/></svg>
        <div class="cmd-thumb" style="margin-top:10px"></div>
        <svg style="margin-top:5px" width="10" height="8" viewBox="0 0 10 8"><path d="M1 2 5 6 9 2" fill="none" stroke="#555" stroke-width="1.500"/></svg>
      </div>
    </div>
  </div>

  <!-- status bar -->
  <div class="status-bar d-flex">
    <div class="st-left"></div>
    <div class="st-coord">35058.8847,-36628.8999,0</div>
    <div class="st-ver">2007</div>
    <div class="st-ico d-flex align-items-center justify-content-center"><svg width="16" height="16"><use href="#s-ann"/></svg></div>
    <span style="width:20px">1:1</span>
    <div class="st-ico y d-flex align-items-center justify-content-center" style="margin-left:3px"><svg width="16" height="16"><use href="#s-ann"/></svg></div>
    <div class="st-ico nar ms-1 d-flex align-items-center justify-content-center"><svg width="16" height="16"><use href="#s-ann"/></svg></div>
    <div class="st-ico d-flex align-items-center justify-content-center"><svg width="16" height="16"><use href="#s-grid"/></svg></div>
    <div class="st-ico d-flex align-items-center justify-content-center"><svg width="16" height="16"><use href="#s-grid"/></svg></div>
    <div class="st-ico d-flex align-items-center justify-content-center"><svg width="16" height="16" viewBox="0 0 16 16"><path d="M2 1V14H15" fill="none" stroke="#d33"/><path d="M2 1V14" stroke="#2a8a2a"/></svg></div>
    <div class="st-ico wid d-flex align-items-center justify-content-center"><svg width="16" height="16" viewBox="0 0 16 16"><circle cx="8" cy="9" r="6" fill="none" stroke="#555" stroke-width="1.500"/><path d="M6 9 15 3M6 9H15" stroke="#d33"/></svg></div>
    <div class="st-ico y d-flex align-items-center justify-content-center"><svg width="16" height="16" viewBox="0 0 16 16"><path d="M8 3V15M1 7H15" stroke="#555"/><rect x="6.500" y="5.500" width="3" height="3" fill="#fff" stroke="#d33"/></svg></div>
    <div class="st-ico y ms-1 d-flex align-items-center justify-content-center"><svg width="16" height="16" viewBox="0 0 16 16"><path d="M2 14 14 2M2 14H15" stroke="#555" stroke-width="1.300"/></svg></div>
    <div class="st-ico y ms-2 d-flex align-items-center justify-content-center"><svg width="16" height="16" viewBox="0 0 16 16"><path d="M8 3V15M1 7H15" stroke="#333"/></svg></div>
    <span class="ms-1" style="width:32px;font-size:13px">模型</span>
    <div class="st-ico d-flex align-items-center justify-content-center"><svg width="17" height="17" viewBox="0 0 20 20"><use href="#s-gear"/></svg></div>
    <div class="st-ico d-flex align-items-center justify-content-center"><svg width="14" height="18" viewBox="0 0 14 18"><circle cx="6" cy="4.500" r="3" fill="#666"/><path d="M1 14C1 8 11 8 11 14V17H1Z" fill="#666"/><circle cx="13" cy="10" r="1" fill="#666"/><circle cx="13" cy="15" r="1" fill="#666"/></svg></div>
  </div>

  <!-- site watermark lies over the command window and the status bar -->
  <div class="mark-box">
    <div class="mark-main">大眼仔-旭</div>
    <div class="mark-sub">dayanzai.me</div>
    <svg class="mark-eye" width="185" height="40" viewBox="0 0 185 40"><circle cx="77" cy="21" r="12.500" fill="#fff" stroke="#000" stroke-width="2"/><circle cx="77" cy="21" r="7" fill="#000"/><circle cx="173" cy="21" r="12.500" fill="#fff" stroke="#000" stroke-width="2"/><circle cx="173" cy="21" r="7" fill="#000"/></svg>
  </div>
</div>
</body>
</html>
